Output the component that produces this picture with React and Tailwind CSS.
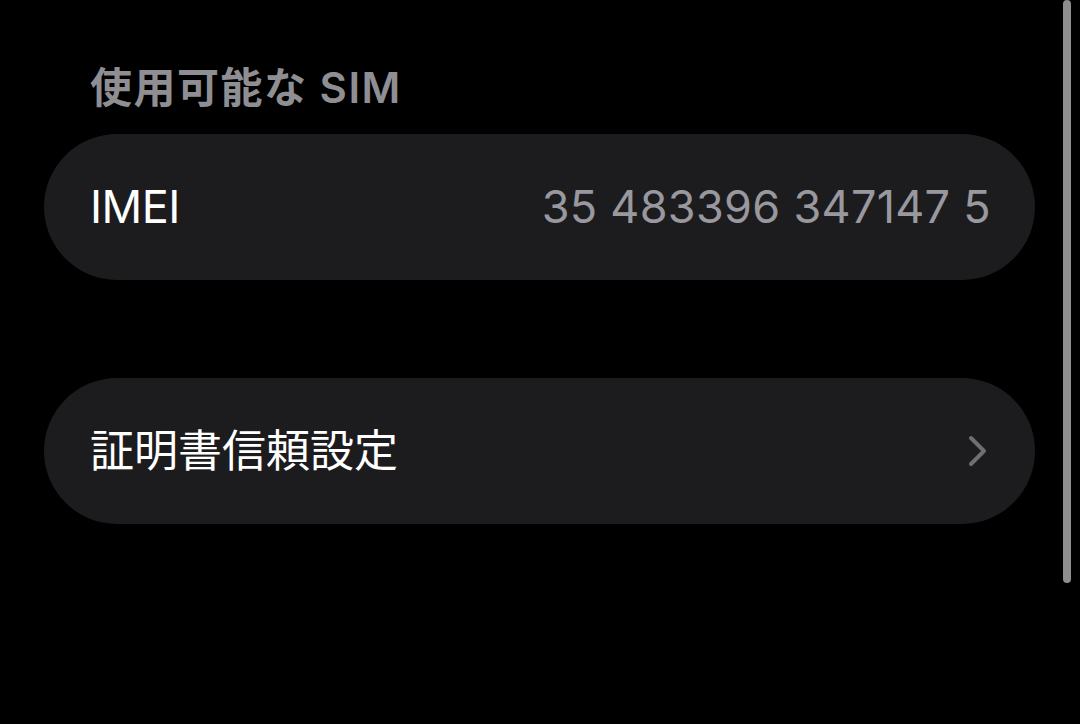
export default function App() {
  const font = { fontFamily: 'Inter, "Noto Sans CJK JP", sans-serif' };
  return (
    <div className="relative w-[1080px] h-[724px] bg-black overflow-hidden" style={font}>
      <div className="flex flex-col pl-[44px] pr-[45px]">
        <div className="pl-[46px] pt-[62px] h-[134px] text-[42px] font-semibold text-[#8e8e93] leading-[52px] tracking-[1.5px]">
          使用可能な SIM
        </div>
        <div className="h-[146px] rounded-full bg-[#1c1c1e] flex items-center justify-between pl-[46px] pr-[44px]">
          <span className="text-[45px] text-white tracking-[-0.5px]">IMEI</span>
          <span className="text-[45px] text-[#98989e] tracking-[0.3px]">35 483396 347147 5</span>
        </div>
        <div className="h-[98px]" />
        <div className="h-[146px] rounded-full bg-[#1c1c1e] flex items-center justify-between pl-[46px] pr-[44px]">
          <span className="text-[44px] text-white">証明書信頼設定</span>
          <svg width="22" height="34" viewBox="0 0 22 34" className="mr-[2px]">
            <path d="M4 4 L17 17 L4 30" fill="none" stroke="#6e6e73" strokeWidth="4" strokeLinecap="round" strokeLinejoin="round" />
          </svg>
        </div>
      </div>
      <div className="absolute left-[1063px] top-0 w-[8px] h-[583px] rounded-full bg-[#8e8e8e]" />
    </div>
  );
}
